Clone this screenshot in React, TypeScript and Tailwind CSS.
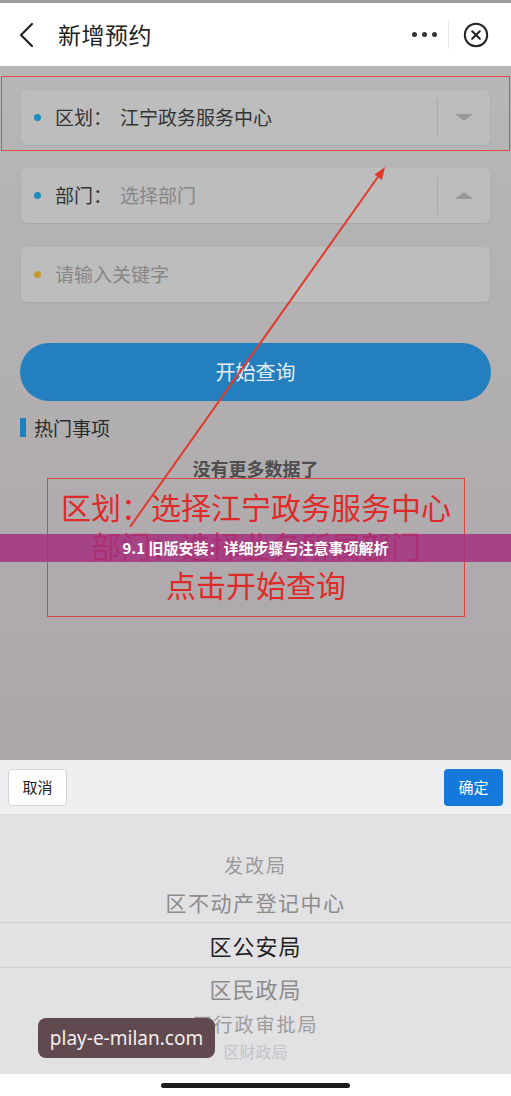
import React from 'react';

const cjk = "[font-family:'Noto_Sans_CJK_SC','Noto_Sans',sans-serif]";

interface FieldProps {
  dot: string;
  label?: string;
  value: string;
  muted?: boolean;
  caret?: 'up' | 'down';
}

const Field: React.FC<FieldProps> = ({ dot, label, value, muted, caret }) => (
  <div className="h-[55px] rounded-md bg-[#bdbdbd] shadow-[0_1px_2px_rgba(0,0,0,0.08)] flex items-center pl-[13px]">
    <span className={`w-[7px] h-[7px] rounded-full ${dot}`} />
    {label && <span className="ml-[14px] text-[19px] text-[#333] w-[65px]">{label}</span>}
    <span className={`text-[19px] ${label ? '' : 'ml-[14px]'} ${muted ? 'text-[#868686]' : 'text-[#333]'}`}>{value}</span>
    {caret && (
      <div className="ml-auto flex items-center h-full">
        <div className="w-px h-[38px] bg-[#a9a9a9]" />
        <div className="w-[52px] flex justify-center">
          {caret === 'down' ? (
            <div className="w-0 h-0 border-l-[9px] border-r-[9px] border-t-[7px] border-l-transparent border-r-transparent border-t-[#999]" />
          ) : (
            <div className="w-0 h-0 border-l-[9px] border-r-[9px] border-b-[7px] border-l-transparent border-r-transparent border-b-[#999]" />
          )}
        </div>
      </div>
    )}
  </div>
);

const PickerRow: React.FC<{ text: string; h: string; cls: string }> = ({ text, h, cls }) => (
  <div className={`${h} flex items-center justify-center ${cls}`}>{text}</div>
);

export default function App() {
  return (
    <div className={`relative w-[511px] h-[1096px] overflow-hidden flex flex-col bg-white ${cjk}`}>
      <div className="h-[3px] bg-[#9c9c9c]" />

      {/* top bar */}
      <div className="h-[63px] bg-white flex items-center pl-[18px] pr-[22px]">
        <svg width="18" height="26" viewBox="0 0 18 26" className="text-[#222]">
          <polyline points="14,2 3,13 14,24" fill="none" stroke="currentColor" strokeWidth="2.2" strokeLinecap="round" strokeLinejoin="round" />
        </svg>
        <span className="ml-[22px] text-[23px] text-[#222] tracking-[0.5px]">新增预约</span>
        <div className="ml-auto flex items-center">
          <div className="flex gap-[5px]">
            <span className="w-[5px] h-[5px] rounded-full bg-[#333]" />
            <span className="w-[5px] h-[5px] rounded-full bg-[#333]" />
            <span className="w-[5px] h-[5px] rounded-full bg-[#333]" />
          </div>
          <div className="w-px h-[28px] bg-[#e8e8e8] ml-[11px] mr-[14px]" />
          <svg width="26" height="26" viewBox="0 0 26 26">
            <circle cx="13" cy="13" r="11.2" fill="none" stroke="#222" strokeWidth="2" />
            <path d="M9.2 9.2 L16.8 16.8 M16.8 9.2 L9.2 16.8" stroke="#222" strokeWidth="2" strokeLinecap="round" />
          </svg>
        </div>
      </div>

      {/* dimmed form */}
      <div className="flex-1 bg-linear-to-b from-[#b7b7b7] to-[#aca6aa] flex flex-col">
        <div className="mt-[10px] mx-[1px] border-[1.5px] border-[#e24a42] px-[19px] pt-[13px] pb-[5px]">
          <Field dot="bg-[#1e8cbd]" label="区划：" value="江宁政务服务中心" caret="down" />
        </div>
        <div className="px-[21px] flex flex-col">
          <div className="mt-[17px]">
            <Field dot="bg-[#1e8cbd]" label="部门：" value="选择部门" muted caret="up" />
          </div>
          <div className="mt-[24px]">
            <Field dot="bg-[#c49a2c]" value="请输入关键字" muted />
          </div>
        </div>
        <div className="mx-[20px] mt-[41px] h-[58px] rounded-full bg-[#247fbf] flex items-center justify-center text-[20px] text-[#e8eef3]">
          开始查询
        </div>
        <div className="mt-[17px] ml-[20px] flex items-center">
          <span className="w-[6px] h-[19px] bg-[#1f7fbf]" />
          <span className="ml-[8px] text-[19px] text-[#2b2b2b] leading-[19px]">热门事项</span>
        </div>
        <div className="mt-[19px] text-center text-[18px] font-bold text-[#4e4e4e] leading-[24px]">没有更多数据了</div>
      </div>

      {/* option picker */}
      <div className="h-[55px] bg-[#efeff1] flex items-center justify-between px-[8px] border-b border-[#dcdcdf]">
        <div className="w-[59px] h-[37px] rounded-[4px] bg-white border border-[#d4d4d4] flex items-center justify-center text-[15px] text-[#222]">取消</div>
        <div className="w-[59px] h-[37px] rounded-[4px] bg-[#1479da] flex items-center justify-center text-[15px] text-white">确定</div>
      </div>
      <div className="h-[259px] bg-[#e2e1e4] flex flex-col pt-[32px]">
        <PickerRow text="发改局" h="h-[36px]" cls="text-[19px] text-[#9a9a9a] tracking-[2px]" />
        <PickerRow text="区不动产登记中心" h="h-[39px]" cls="text-[21px] text-[#8c8c8c] tracking-[1.5px]" />
        <PickerRow text="区公安局" h="h-[46px]" cls="text-[22px] text-[#1e1e1e] tracking-[1px] border-y border-[#cfcfd3]" />
        <PickerRow text="区民政局" h="h-[40px]" cls="text-[22px] text-[#8c8c8c] tracking-[1px]" />
        <PickerRow text="区行政审批局" h="h-[32px]" cls="text-[19px] text-[#9c9c9c] tracking-[2px]" />
        <PickerRow text="区财政局" h="h-[22px]" cls="text-[16px] text-[#c4c4c7]" />
      </div>
      <div className="flex-none h-[22px] bg-white flex justify-center pt-[9px]">
        <div className="w-[189px] h-[5px] rounded-full bg-[#1c1c1c]" />
      </div>

      {/* annotation arrow */}
      <svg className="absolute left-0 top-0 pointer-events-none" width="511" height="1096">
        <line x1="130" y1="527" x2="380" y2="174" stroke="#e2392c" strokeWidth="2" />
        <polygon points="385,167 382,180 374.5,174.5" fill="#e2392c" />
      </svg>

      {/* annotation box */}
      <div className="absolute left-[47px] top-[478px] w-[418px] h-[139px] border border-[#d9463e] flex flex-col items-center pt-[8px] text-[#df2a2a] text-[30px] leading-[39px]">
        <span>区划：选择江宁政务服务中心</span>
        <span>部门：选择业务所属部门</span>
        <span>点击开始查询</span>
      </div>

      {/* banner */}
      <div className="absolute left-0 top-[534px] w-[511px] h-[28px] bg-[#a3307f]/85 flex items-center justify-center text-white text-[15px] font-bold">
        9.1 旧版安装：详细步骤与注意事项解析
      </div>

      {/* watermark */}
      <div className="absolute left-[38px] top-[1018px] w-[177px] h-[40px] rounded-[8px] bg-[#604a4f] flex items-center justify-center text-[19px] text-[#f4eeee] [font-family:'Noto_Sans',sans-serif]">
        play-e-milan.com
      </div>
    </div>
  );
}
